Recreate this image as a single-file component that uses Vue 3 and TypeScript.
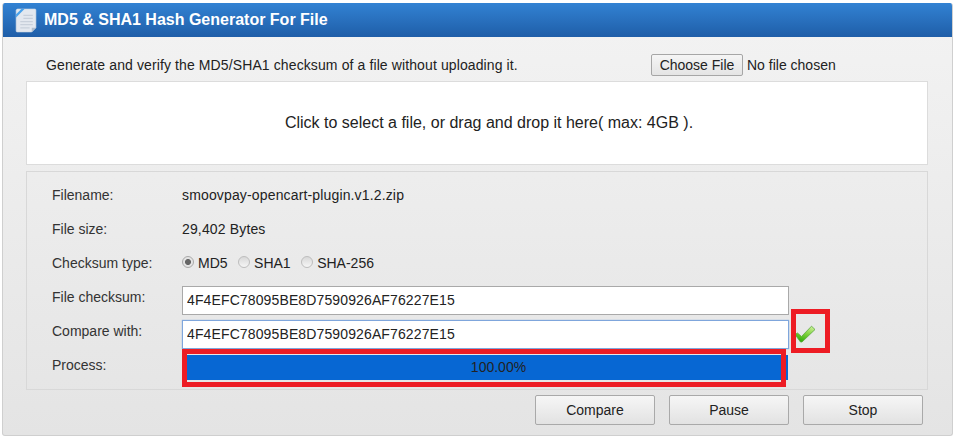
<template>
  <div class="page">
    <section class="panel">
      <header class="panel-head">
        <svg class="doc-icon" viewBox="0 0 22 24">
          <path d="M3 1h17a1 1 0 0 1 1 1v17l-4 4H3a1 1 0 0 1-1-1V2z" fill="#e3e8ef" stroke="#cfd8e4" stroke-width="0.6"/>
          <path d="M17 23v-4h4z" fill="#aebccd"/>
          <path d="M2 6 7 1h3L2 9z" fill="#4aa3ec"/>
          <path d="M9 7h9M9 10h9M6 13h12M6 16h12M6 19h9" stroke="#c8d0db" stroke-width="1.2"/>
        </svg>
        <h1>MD5 &amp; SHA1 Hash Generator For File</h1>
      </header>

      <div class="panel-body">
        <div class="intro">
          <p>Generate and verify the MD5/SHA1 checksum of a file without uploading it.</p>
          <div class="file-pick">
            <button class="choose-btn">Choose File</button>
            <span>No file chosen</span>
          </div>
        </div>

        <div class="dropzone">Click to select a file, or drag and drop it here( max: 4GB ).</div>

        <div class="details">
          <div class="row">
            <label>Filename:</label>
            <span class="val">smoovpay-opencart-plugin.v1.2.zip</span>
          </div>
          <div class="row">
            <label>File size:</label>
            <span class="val">29,402 Bytes</span>
          </div>
          <div class="row">
            <label>Checksum type:</label>
            <div class="radios">
              <span v-for="t in types" :key="t" class="radio-item">
                <i class="radio" :class="{ on: t === checksumType }"></i>{{ t }}
              </span>
            </div>
          </div>
          <div class="row">
            <label>File checksum:</label>
            <input class="hash" type="text" :value="hash" readonly />
          </div>
          <div class="row">
            <label>Compare with:</label>
            <input class="hash focused" type="text" :value="hash" readonly />
            <span class="check-mark">
              <svg viewBox="0 0 22 18" width="22" height="18">
                <defs>
                  <linearGradient id="chk" x1="0.7" y1="0" x2="0.3" y2="1">
                    <stop offset="0" stop-color="#c8ef94"/>
                    <stop offset="0.45" stop-color="#7fd23c"/>
                    <stop offset="1" stop-color="#2fa80a"/>
                  </linearGradient>
                </defs>
                <path d="M1 9.5 3.5 8l4 3.5L17.5 1.2 21 4.5 8 17H6.5z" fill="url(#chk)" stroke="#5aa83e" stroke-width="0.8" stroke-linejoin="round"/>
              </svg>
            </span>
          </div>
          <div class="row">
            <label>Process:</label>
            <div class="progress">{{ progress }}</div>
          </div>
        </div>

        <div class="actions">
          <button v-for="b in buttons" :key="b" class="action">{{ b }}</button>
        </div>
      </div>
    </section>

    <!-- hand drawn annotation boxes on the screenshot -->
    <div class="mark mark-check"></div>
    <div class="mark mark-progress"></div>
  </div>
</template>

<script setup lang="ts">
const hash = '4F4EFC78095BE8D7590926AF76227E15'
const checksumType = 'MD5'
const progress = '100.00%'
const types = ['MD5', 'SHA1', 'SHA-256']
const buttons = ['Compare', 'Pause', 'Stop']
</script>

<style>
html, body { margin: 0; background: #fff; }
</style>

<style scoped>
.page {
  position: relative; width: 970px; height: 442px; overflow: hidden; box-sizing: border-box;
  padding: 3px 0 0 2px; background: #fff;
  font-family: "Liberation Sans", Arial, sans-serif; font-size: 14px; color: #222;
}
.panel {
  width: 951px; height: 433px; box-sizing: border-box;
  border: 1px solid #cfcfcf; border-top: 0; border-radius: 3px; overflow: hidden;
  background: linear-gradient(#f3f3f3, #e4e4e4);
}
.panel-head {
  height: 34px; display: flex; align-items: center; gap: 7px; padding-left: 11px;
  background: linear-gradient(#3282d3, #1f5ea8); color: #fff;
}
.panel-head h1 { margin: 0; font-size: 16px; font-weight: 700; }
.doc-icon { width: 23px; height: 25px; }
.panel-body { padding: 11px 24px 0 23px; }

.intro { display: flex; justify-content: space-between; align-items: center; height: 33px; padding-left: 20px; }
.intro p { margin: 0; letter-spacing: 0.11px; }
.file-pick { display: flex; align-items: center; gap: 4px; width: 277px; font-size: 14px; }
.choose-btn {
  width: 92px; height: 22px; padding: 0; border: 1px solid #a6a6a6; border-radius: 2px;
  background: linear-gradient(#f5f5f5, #e4e4e4); color: #222;
  font-family: inherit; font-size: 14px;
}

.dropzone {
  height: 84px; box-sizing: border-box; display: flex; align-items: center; justify-content: center;
  padding-left: 24px; margin-bottom: 6px; background: #fff; border: 1px solid #dcdcdc; font-size: 16px;
}

.details {
  height: 219px; box-sizing: border-box; padding: 6px 0 0 25px;
  border: 1px solid #d8d8d8;
}
.row { display: flex; align-items: center; height: 34px; }
.row label { width: 130px; flex: none; color: #333; }
.val { letter-spacing: 0.15px; }

.radios { display: flex; gap: 10.5px; }
.radio-item { display: flex; align-items: center; gap: 4px; }
.radio {
  width: 12px; height: 12px; margin-top: -3px; box-sizing: border-box; border-radius: 50%;
  border: 1px solid #bdbdbd; background: linear-gradient(#d8d8d8, #f6f6f6);
}
.radio.on { background: radial-gradient(circle, #666 0 2.6px, #e4e4e4 3.4px); border-color: #a9a9a9; }

.hash {
  width: 607px; height: 29px; margin-top: 7px; box-sizing: border-box; padding: 0 4px 2px; flex: none;
  border: 1px solid #a9a9a9; background: #fff; color: #222; outline: none;
  font-family: inherit; font-size: 14px; letter-spacing: 0.125px;
}
.hash.focused { border-color: #7fa6dc; box-shadow: 0 0 1px #7fa6dc; }
.check-mark { display: flex; margin: 6px 0 0 5px; }

.progress {
  width: 601px; height: 25px; margin: 5px 0 0 5px; padding: 0 0 2px 22px; box-sizing: border-box;
  background: #0767d3; color: #222;
  display: flex; align-items: center; justify-content: center;
}

.actions { display: flex; justify-content: flex-end; gap: 14px; padding: 5px 5px 0 0; }
.action {
  width: 120px; height: 30px; padding: 0; border: 1px solid #a9a9a9; border-radius: 2px;
  background: linear-gradient(#f6f6f6, #e2e2e2); color: #222;
  font-family: inherit; font-size: 14px;
}

.mark { position: absolute; box-sizing: border-box; border: 5px solid #ed1c24; }
.mark-check { left: 791px; top: 309px; width: 39px; height: 44px; }
.mark-progress { left: 182px; top: 349px; width: 604px; height: 38px; }
</style>
